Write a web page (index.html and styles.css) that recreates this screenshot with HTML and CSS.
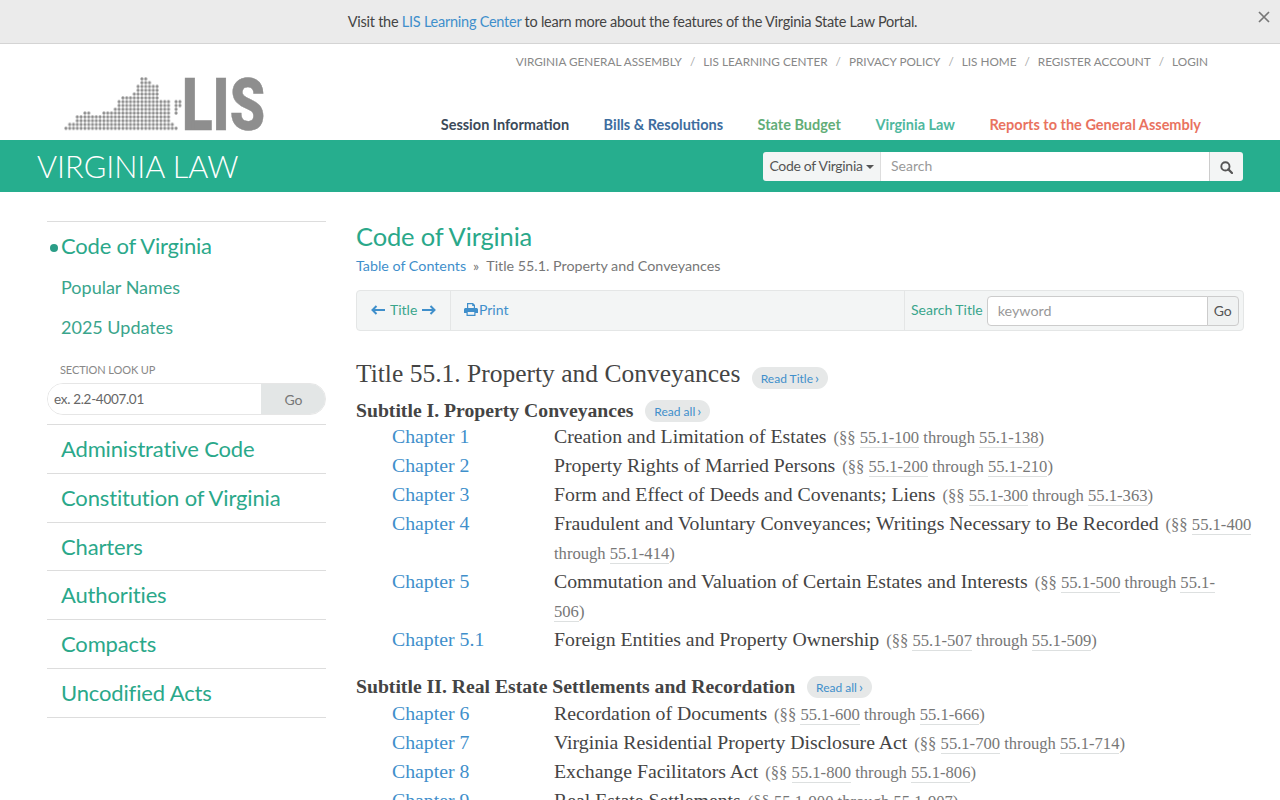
FILE: index.html
```html
<!DOCTYPE html>
<html lang="en">
<head>
    <meta charset="UTF-8">
    <meta name="viewport" content="width=device-width, initial-scale=1.0">
    <title>Code of Virginia - Title 55.1</title>
    <link rel="stylesheet" href="styles.css">
</head>
<body>
    <div class="notice">
        <p>Visit the <a href="#">LIS Learning Center</a> to learn more about the features of the Virginia State Law Portal.</p>
        <button class="notice-close" aria-label="Close">
            <svg width="12" height="12" viewBox="0 0 12 12"><path d="M1 1L11 11M11 1L1 11" stroke="#777" stroke-width="1.7" fill="none"/></svg>
        </button>
    </div>

    <header class="site-header">
        <a class="logo" href="#">
            <svg width="240" height="56" viewBox="0 0 240 56">
                <defs>
                    <pattern id="dots" x="0" y="0" width="3.8" height="3.8" patternUnits="userSpaceOnUse">
                        <circle cx="1.9" cy="1.9" r="1.55" fill="#8e8e8e"/>
                    </pattern>
                </defs>
                <!-- the state, one rectangle per row of dots -->
                <path fill="url(#dots)" d="M76 0h7.6v3.8H76z M76 3.8h11.4v3.8H76z M72.2 7.6h22.8v7.6H72.2z M68.4 15.2h26.6v3.8H68.4z M57 19h38v3.8H57z M53.2 22.8h53.2v7.6H53.2z M110.200 22.800h7.6v7.6h-7.6z M49.4 30.4h57v3.8h-57z M110.200 30.400h3.8v7.600h-3.800z M19 34.2h7.6V38H19z M38 34.2h68.4V38H38z M11.4 38h95v7.6h-95z M3.8 45.6h106.4v3.8H3.8z M0 49.4h114v3.8H0z"/>
                <text class="logo-text" x="118" y="53" textLength="83" lengthAdjust="spacingAndGlyphs">LIS</text>
            </svg>
        </a>
        <div class="header-links">
            <ul class="top-links">
                <li><a href="#">Virginia General Assembly</a></li>
                <li><a href="#">LIS Learning Center</a></li>
                <li><a href="#">Privacy Policy</a></li>
                <li><a href="#">LIS Home</a></li>
                <li><a href="#">Register Account</a></li>
                <li><a href="#">Login</a></li>
            </ul>
            <nav class="main-nav">
                <a class="nav-session" href="#">Session Information</a>
                <a class="nav-bills" href="#">Bills &amp; Resolutions</a>
                <a class="nav-budget" href="#">State Budget</a>
                <a class="nav-law" href="#">Virginia Law</a>
                <a class="nav-reports" href="#">Reports to the General Assembly</a>
            </nav>
        </div>
    </header>

    <div class="law-bar">
        <div class="law-title">Virginia Law</div>
        <form class="law-search">
            <button type="button" class="search-scope">Code of Virginia<span class="caret"></span></button>
            <input type="text" placeholder="Search">
            <button type="button" class="search-submit" aria-label="Search">
                <svg width="13" height="13" viewBox="0 0 13 13"><circle cx="5.4" cy="5.4" r="4.1" fill="none" stroke="#555" stroke-width="1.9"/><path d="M8.4 8.4L12 12" stroke="#555" stroke-width="2.2" stroke-linecap="round"/></svg>
            </button>
        </form>
    </div>

    <div class="page">
        <aside class="sidebar">
            <ul class="side-group">
                <li class="side-main"><a href="#">Code of Virginia</a></li>
                <li class="side-sub"><a href="#">Popular Names</a></li>
                <li class="side-sub"><a href="#">2025 Updates</a></li>
            </ul>
            <div class="lookup">
                <label for="lookup-input">Section Look Up</label>
                <div class="lookup-row">
                    <input id="lookup-input" type="text" placeholder="ex. 2.2-4007.01">
                    <button type="button">Go</button>
                </div>
            </div>
            <ul class="side-list">
                <li><a href="#">Administrative Code</a></li>
                <li><a href="#">Constitution of Virginia</a></li>
                <li><a href="#">Charters</a></li>
                <li><a href="#">Authorities</a></li>
                <li><a href="#">Compacts</a></li>
                <li><a href="#">Uncodified Acts</a></li>
            </ul>
        </aside>

        <main class="content">
            <h1>Code of Virginia</h1>
            <div class="breadcrumb"><a href="#">Table of Contents</a><span class="sep">»</span>Title 55.1. Property and Conveyances</div>

            <div class="toolbar">
                <div class="tool-cell tool-title">
                    <svg class="arrow" width="14" height="10" viewBox="0 0 14 10"><path d="M14 5H2M5.5 1L1.5 5L5.5 9" fill="none" stroke="#3f8fcb" stroke-width="2"/></svg>
                    <a href="#">Title</a>
                    <svg class="arrow" width="14" height="10" viewBox="0 0 14 10"><path d="M0 5H12M8.5 1L12.5 5L8.5 9" fill="none" stroke="#3f8fcb" stroke-width="2"/></svg>
                </div>
                <div class="tool-cell tool-print">
                    <svg width="14" height="13" viewBox="0 0 14 13"><path fill="#3f8fcb" d="M3 0h6l2 2v3H9.8V3H8.2V1.2H4.2V5H3z M1.6 5h10.8c.9 0 1.6.7 1.6 1.6V10h-2.5v3H2.500V10H0V6.600C0 5.700.7 5 1.600 5z M3.700 9v2.800h6.600V9z"/></svg>
                    <a href="#">Print</a>
                </div>
                <div class="tool-cell tool-search">
                    <label for="keyword">Search Title</label>
                    <input id="keyword" type="text" placeholder="keyword">
                    <button type="button">Go</button>
                </div>
            </div>

            <h2>Title 55.1. Property and Conveyances <a class="pill pill-title" href="#">Read Title<span class="chev">›</span></a></h2>

            <h3>Subtitle I. Property Conveyances <a class="pill" href="#">Read all<span class="chev">›</span></a></h3>
            <ul class="chapters">
                <li><a class="ch" href="#">Chapter 1</a><div>Creation and Limitation of Estates <span class="range">(§§ <a href="#">55.1-100</a> through <a href="#">55.1-138</a>)</span></div></li>
                <li><a class="ch" href="#">Chapter 2</a><div>Property Rights of Married Persons <span class="range">(§§ <a href="#">55.1-200</a> through <a href="#">55.1-210</a>)</span></div></li>
                <li><a class="ch" href="#">Chapter 3</a><div>Form and Effect of Deeds and Covenants; Liens <span class="range">(§§ <a href="#">55.1-300</a> through <a href="#">55.1-363</a>)</span></div></li>
                <li><a class="ch" href="#">Chapter 4</a><div>Fraudulent and Voluntary Conveyances; Writings Necessary to Be Recorded <span class="range">(§§ <a href="#">55.1-400</a><br>through <a href="#">55.1-414</a>)</span></div></li>
                <li><a class="ch" href="#">Chapter 5</a><div>Commutation and Valuation of Certain Estates and Interests <span class="range">(§§ <a href="#">55.1-500</a> through <a href="#">55.1-<br>506</a>)</span></div></li>
                <li><a class="ch" href="#">Chapter 5.1</a><div>Foreign Entities and Property Ownership <span class="range">(§§ <a href="#">55.1-507</a> through <a href="#">55.1-509</a>)</span></div></li>
            </ul>

            <h3>Subtitle II. Real Estate Settlements and Recordation <a class="pill" href="#">Read all<span class="chev">›</span></a></h3>
            <ul class="chapters">
                <li><a class="ch" href="#">Chapter 6</a><div>Recordation of Documents <span class="range">(§§ <a href="#">55.1-600</a> through <a href="#">55.1-666</a>)</span></div></li>
                <li><a class="ch" href="#">Chapter 7</a><div>Virginia Residential Property Disclosure Act <span class="range">(§§ <a href="#">55.1-700</a> through <a href="#">55.1-714</a>)</span></div></li>
                <li><a class="ch" href="#">Chapter 8</a><div>Exchange Facilitators Act <span class="range">(§§ <a href="#">55.1-800</a> through <a href="#">55.1-806</a>)</span></div></li>
                <li><a class="ch" href="#">Chapter 9</a><div>Real Estate Settlements <span class="range">(§§ <a href="#">55.1-900</a> through <a href="#">55.1-907</a>)</span></div></li>
            </ul>
        </main>
    </div>
</body>
</html>
```

FILE: styles.css
```css
html {
    overflow: hidden;
}

body {
    font-family: Lato, "Open Sans", sans-serif;
    margin: 0;
    padding: 0;
    background-color: #fff;
    color: #555;
    height: 800px;
    overflow: hidden;
}

a {
    text-decoration: none;
}

ul {
    list-style: none;
    margin: 0;
    padding: 0;
}

.notice {
    height: 43px;
    padding-right: 15px;
    background-color: #ebebeb;
    border-bottom: 1px solid #d4d4d4;
    display: flex;
    align-items: center;
    justify-content: center;
    position: relative;
    font-size: 14.5px;
    letter-spacing: -0.25px;
    color: #444;
}

.notice p {
    margin: 0;
}

.notice a {
    color: #3f8fcb;
}

.notice-close {
    position: absolute;
    right: 10px;
    top: 11px;
    background: none;
    border: none;
    padding: 0;
}

.site-header {
    height: 96px;
    display: flex;
    justify-content: space-between;
}

.logo {
    margin: 33px 0 0 64px;
    height: 56px;
}

.logo-text {
    font-family: Roboto, "Liberation Sans", sans-serif;
    font-weight: 900;
    font-size: 73px;
    fill: #8e8e8e;
    stroke: #8e8e8e;
    stroke-width: 0.5px;
}

.header-links {
    display: flex;
    flex-direction: column;
    align-items: flex-end;
    padding: 11px 72px 0 0;
}

.top-links {
    display: flex;
    font-size: 11.75px;
    line-height: 14px;
    text-transform: uppercase;
}

.top-links a {
    color: #888;
}

.top-links li + li::before {
    content: "/";
    color: #aaa;
    margin: 0 8px;
}

.main-nav {
    display: flex;
    gap: 34.5px;
    margin-top: 47px;
    padding-right: 7px;
    font-size: 14.5px;
    font-weight: 700;
    line-height: 18px;
}

.nav-session { color: #3b4a59; }
.nav-bills { color: #3d6d9e; }
.nav-budget { color: #62ad78; }
.nav-law { color: #4fb89e; }
.nav-reports { color: #e9735f; }

.law-bar {
    height: 52px;
    background-color: #26ae8e;
    display: flex;
    align-items: center;
    justify-content: space-between;
    padding: 0 37px;
}

.law-title {
    font-size: 30.7px;
    font-weight: 300;
    color: #fff;
    text-transform: uppercase;
}

.law-search {
    display: flex;
    width: 480px;
    height: 29px;
    border-radius: 3px;
    overflow: hidden;
}

.search-scope {
    width: 118px;
    background-color: #f3f5f5;
    border: none;
    border-right: 1px solid #ddd;
    padding: 0 0 2px;
    font-family: inherit;
    font-size: 14px;
    letter-spacing: -0.3px;
    color: #555;
}

.caret {
    display: inline-block;
    margin-left: 3px;
    vertical-align: middle;
    border-top: 4px solid #555;
    border-left: 4px solid transparent;
    border-right: 4px solid transparent;
}

.law-search input {
    flex: 1;
    min-width: 0;
    border: none;
    padding: 0 10px 2px;
    font-family: inherit;
    font-size: 14px;
    outline: none;
}

.law-search input::placeholder,
.tool-search input::placeholder {
    color: #999;
}

.search-submit {
    width: 34px;
    background-color: #f3f5f5;
    border: none;
    border-left: 1px solid #ccc;
    padding: 2px 0 0;
}

.search-submit svg {
    display: block;
    margin: 0 auto;
}

.page {
    display: flex;
    padding: 29px 0 0 47px;
}

.sidebar {
    width: 279px;
    flex-shrink: 0;
}

.side-group {
    border-top: 1px solid #ddd;
    padding-top: 3px;
}

.side-main a {
    display: block;
    font-size: 22px;
    letter-spacing: -0.2px;
    line-height: 42px;
    color: #2aa88a;
    padding-left: 14px;
    position: relative;
}

.side-main a::before {
    content: "";
    position: absolute;
    left: 3px;
    top: 19px;
    width: 8px;
    height: 8px;
    border-radius: 50%;
    background-color: #2a9d87;
}

.side-sub a {
    display: block;
    font-size: 18px;
    line-height: 40px;
    color: #3aa58c;
    padding-left: 14px;
}

.lookup {
    padding-top: 16px;
}

.lookup label {
    display: block;
    padding-left: 13px;
    font-size: 11px;
    letter-spacing: -0.1px;
    line-height: 14px;
    text-transform: uppercase;
    color: #888;
    margin-bottom: 6px;
}

.lookup-row {
    display: flex;
    height: 32px;
    border-radius: 16px;
    overflow: hidden;
    border: 1px solid #e6e6e6;
    box-sizing: border-box;
}

.lookup-row input {
    flex: 1;
    min-width: 0;
    border: none;
    padding: 0 0 0 6px;
    font-family: inherit;
    font-size: 13.5px;
    letter-spacing: -0.3px;
    outline: none;
}

.lookup-row input::placeholder {
    color: #666;
}

.lookup-row button {
    width: 65px;
    margin: -1px -1px -1px 0;
    border: none;
    background-color: #e3e6e6;
    font-family: inherit;
    font-size: 14px;
    color: #777;
}

.side-list {
    margin-top: 9px;
    border-top: 1px solid #ddd;
}

.side-list li {
    border-bottom: 1px solid #ddd;
}

.side-list a {
    display: block;
    font-size: 22px;
    letter-spacing: -0.15px;
    line-height: 47.83px;
    color: #2aa88a;
    padding-left: 14px;
}

.content {
    width: 888px;
    margin-left: 30px;
}

.content h1 {
    margin: -1px 0 0;
    font-size: 25.5px;
    letter-spacing: -0.15px;
    font-weight: 400;
    line-height: 32px;
    color: #2aa88a;
}

.breadcrumb {
    margin-top: 5px;
    font-size: 14.3px;
    line-height: 18px;
    color: #777;
}

.breadcrumb a {
    color: #3f8fcb;
}

.sep {
    margin: 0 7px;
}

.toolbar {
    display: flex;
    height: 41px;
    box-sizing: border-box;
    margin-top: 15px;
    background-color: #f3f5f5;
    border: 1px solid #e4e6e6;
    border-radius: 4px;
    font-size: 14px;
}

.tool-cell {
    display: flex;
    align-items: center;
}

.tool-title {
    width: 94px;
    box-sizing: border-box;
    padding: 0 0 2px 14px;
    gap: 5px;
    border-right: 1px solid #e4e6e6;
}

.tool-title a {
    color: #3aa58c;
}

.tool-print {
    flex: 1;
    padding: 0 0 2px 13px;
    gap: 1px;
}

.tool-print a {
    color: #3f8fcb;
}

.tool-search {
    width: 339px;
    box-sizing: border-box;
    padding-left: 6px;
    border-left: 1px solid #e4e6e6;
}

.tool-search label {
    color: #3aa58c;
    margin: 0 4px 2px 0;
}

.tool-search input {
    width: 221px;
    height: 30px;
    box-sizing: border-box;
    border: 1px solid #ccc;
    border-radius: 4px 0 0 4px;
    padding: 0 10px;
    font-family: inherit;
    font-size: 14.3px;
    outline: none;
}

.tool-search button {
    width: 32px;
    height: 30px;
    margin-left: -1px;
    border: 1px solid #ccc;
    border-radius: 0 4px 4px 0;
    background-color: #f0f2f2;
    padding: 0;
    font-family: inherit;
    font-size: 14px;
    color: #555;
}

.content h2,
.content h3,
.chapters {
    font-family: "Liberation Serif", serif;
}

.content h2 {
    margin: 27px 0 0;
    font-size: 25.5px;
    font-weight: 400;
    line-height: 32px;
    color: #444;
}

.content h3 {
    margin: 8px 0 0;
    font-size: 19.7px;
    font-weight: 700;
    line-height: 24px;
    color: #444;
}

.chapters + h3 {
    margin: 20px 0 1px;
}

.pill {
    display: inline-block;
    height: 22px;
    margin-left: 7px;
    padding: 0 9px;
    border-radius: 11px;
    background-color: #e6e8e8;
    font-family: Lato, sans-serif;
    font-size: 12px;
    font-weight: 400;
    line-height: 22px;
    color: #3f8fcb;
    vertical-align: 1px;
}

.pill-title {
    margin-left: 5px;
    vertical-align: -1px;
}

.chev {
    margin-left: 2px;
    font-size: 14px;
}

.chapters {
    margin-right: -10px;
    padding-left: 36px;
    font-size: 19.8px;
    line-height: 29px;
    color: #444;
}

.chapters li {
    display: grid;
    grid-template-columns: 162px 1fr;
}

.ch {
    color: #3f8fcb;
}

.range {
    margin-left: 2px;
    font-size: 16.6px;
    line-height: 1;
    color: #777;
}

.range a {
    color: #777;
    border-bottom: 1px solid #dde0e0;
}
```
